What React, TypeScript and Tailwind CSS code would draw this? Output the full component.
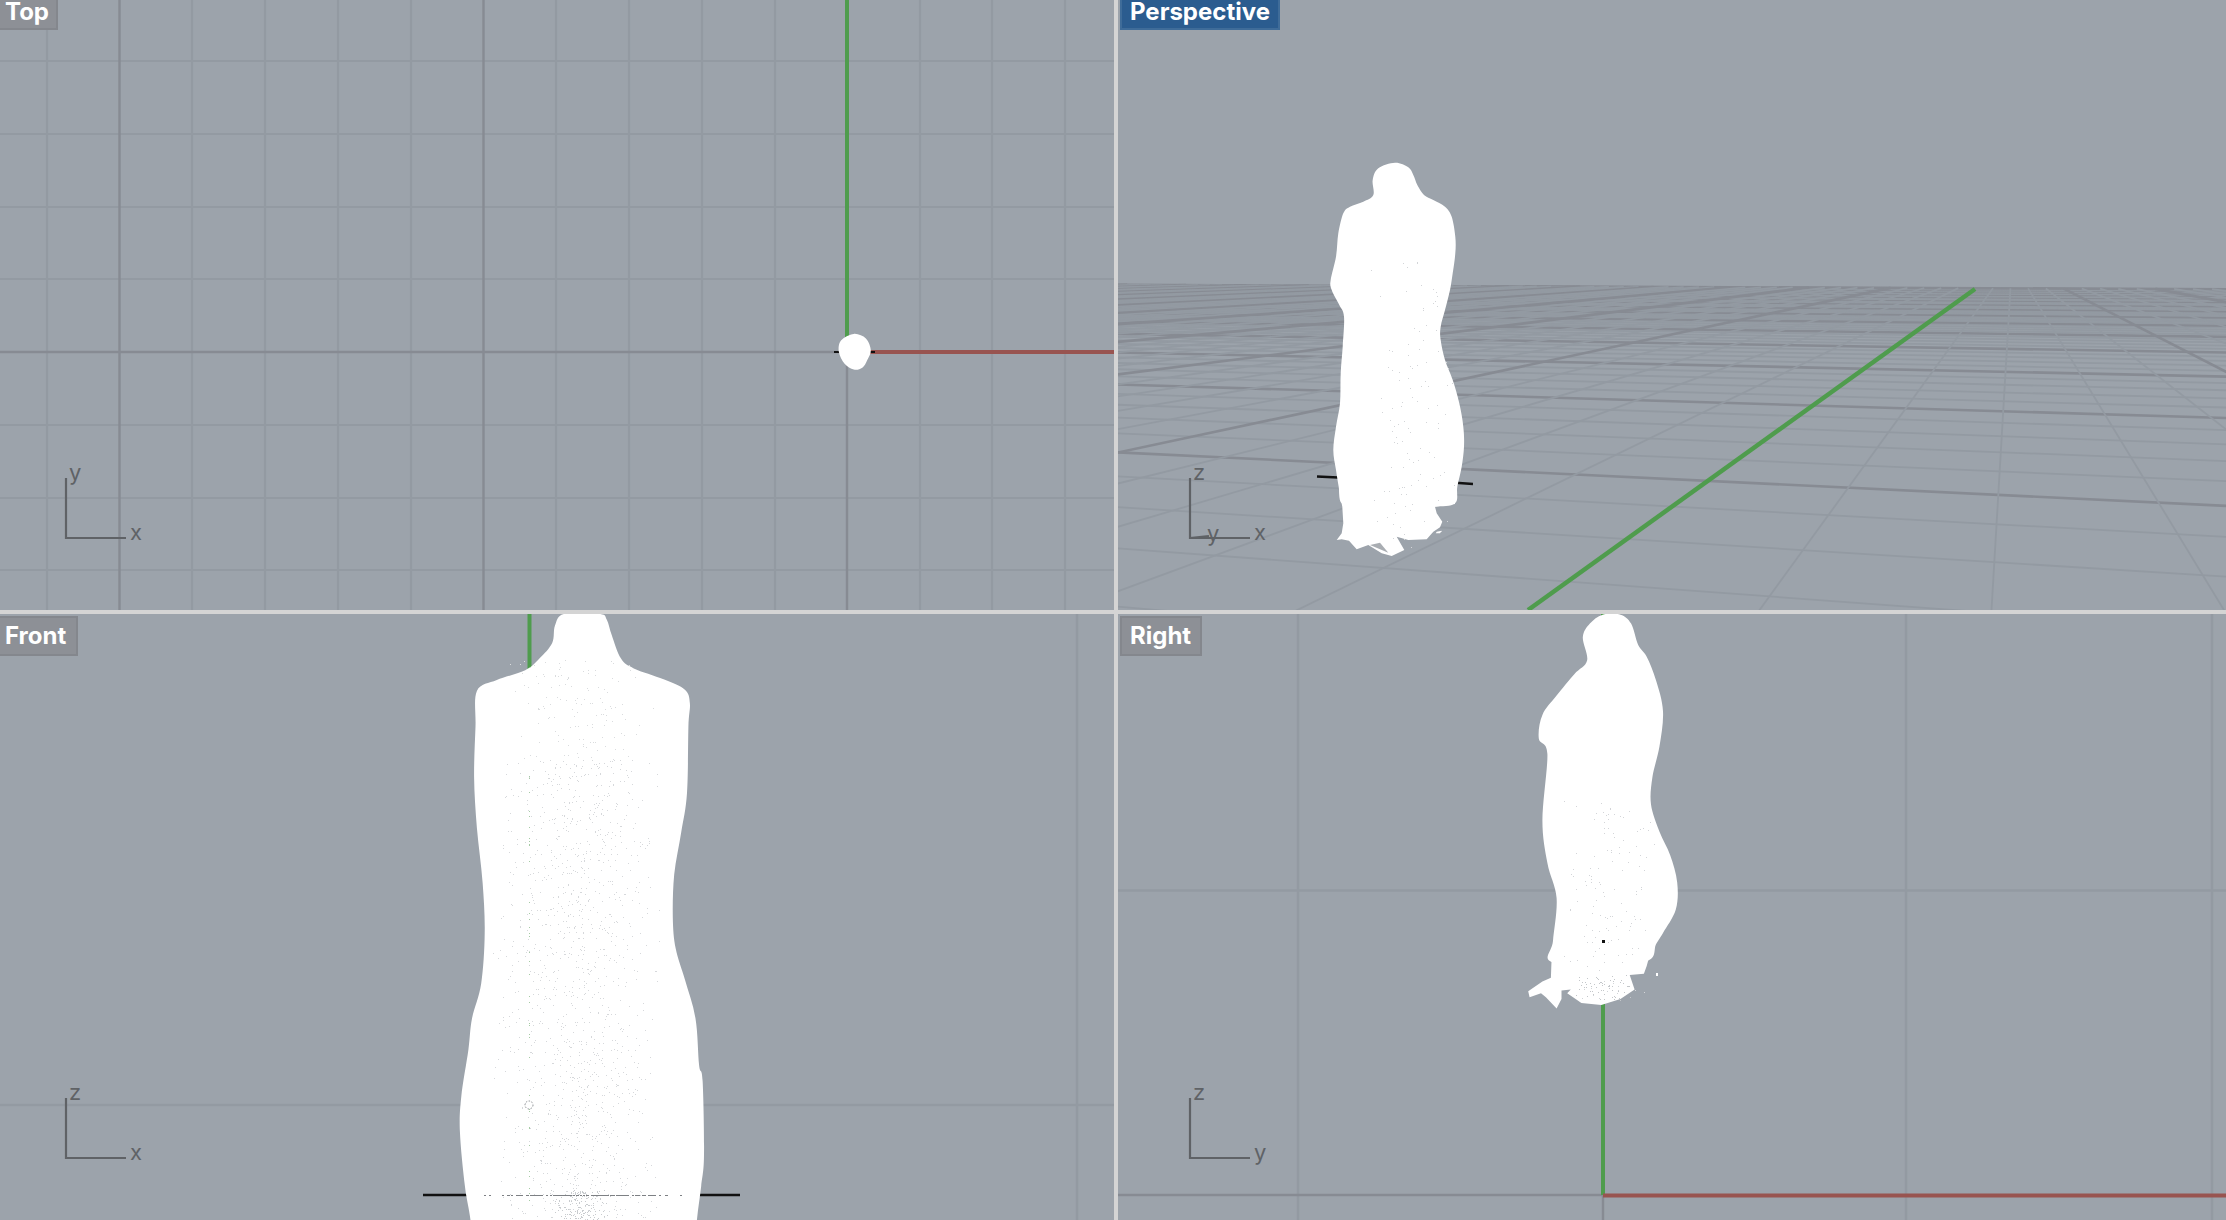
import React from "react";

type Pt = [number, number];

// smooth closed outline through the points
function outline(pts: Pt[]) {
  const n = pts.length;
  let d = `M${pts[0][0].toFixed(1)} ${pts[0][1].toFixed(1)}`;
  for (let i = 0; i < n; i++) {
    const p0 = pts[(i - 1 + n) % n];
    const p1 = pts[i];
    const p2 = pts[(i + 1) % n];
    const p3 = pts[(i + 2) % n];
    const c1x = p1[0] + (p2[0] - p0[0]) / 6;
    const c1y = p1[1] + (p2[1] - p0[1]) / 6;
    const c2x = p2[0] - (p3[0] - p1[0]) / 6;
    const c2y = p2[1] - (p3[1] - p1[1]) / 6;
    d += `C${c1x.toFixed(1)} ${c1y.toFixed(1)} ${c2x.toFixed(1)} ${c2y.toFixed(1)} ${p2[0].toFixed(1)} ${p2[1].toFixed(1)}`;
  }
  return d + "Z";
}

const jagged = (pts: Pt[]) => pts.map(([x, y]) => `${x.toFixed(1)},${y.toFixed(1)}`).join(" ");

const BLOB: Pt[] = ([
  [1203, 858], [1220, 870], [1227, 900], [1222, 925], [1215, 945], [1203, 950], [1190, 935], [1182, 905], [1185, 875],
] as Pt[]).map(([x, y]) => [x / 1.409, y / 2.57]);

const PERSP_BODY: Pt[] = ([
  [285, 68], [325, 82], [340, 105], [352, 135], [372, 165], [400, 180], [435, 200], [455, 230], [466, 290], [466, 340],
  [458, 400], [450, 450], [435, 510], [422, 560], [422, 600], [435, 660], [458, 720], [478, 790], [490, 860], [492, 920],
  [485, 980], [472, 1040], [465, 1090], [400, 1100], [300, 1100], [175, 1100], [125, 1090], [116, 1040], [108, 990], [100, 930], [108, 860], [120, 790],
  [122, 700], [128, 620], [132, 530], [118, 495], [95, 450], [92, 420], [108, 350], [115, 280], [130, 220], [150, 200],
  [190, 185], [220, 165], [218, 120], [235, 85],
] as Pt[]).map(([x, y]) => [1300 + x / 3, 140 + y / 3]);

const PERSP_FRINGE: Pt[] = ([
  [390, 0], [390, 42], [330, 50], [335, 70], [352, 95], [345, 112], [325, 125], [305, 148], [250, 150], [215, 140],
  [238, 180], [200, 198], [170, 190], [130, 165], [95, 178], [72, 152], [50, 148], [35, 150], [50, 130], [55, 100], [52, 50], [42, 0],
] as Pt[]).map(([x, y]) => [1325 + x / 3, 490 + y / 3]);

const PERSP_CHIP: Pt[] = ([[335, 125], [350, 122], [345, 130], [332, 130]] as Pt[]).map(([x, y]) => [1325 + x / 3, 490 + y / 3]);
const PERSP_GAP: Pt[] = ([[135, 165], [165, 158], [190, 188]] as Pt[]).map(([x, y]) => [1325 + x / 3, 490 + y / 3]);

const FRONT_BODY: Pt[] = ([
  [795, 10], [782, 40], [778, 85], [760, 125], [740, 155], [700, 180], [672, 208], [670, 300], [668, 430], [672, 560],
  [680, 700], [683, 830], [678, 960], [665, 1050], [660, 1130], [650, 1250], [648, 1340], [655, 1480], [663, 1568], [668, 1680],
  [977, 1680], [982, 1568], [988, 1480], [992, 1400], [990, 1210], [985, 1170], [980, 1050], [965, 950], [952, 870], [948, 790],
  [950, 680], [960, 570], [968, 470], [970, 300], [972, 240], [965, 205], [935, 178], [893, 150], [875, 125], [862, 65],
  [855, 25], [845, 10],
] as Pt[]).map(([x, y]) => [x / 1.409, 610 + y / 2.57]);

const RIGHT_BODY: Pt[] = ([
  [690, 12], [715, 12], [730, 35], [740, 90], [752, 120], [765, 180], [775, 260], [770, 350], [760, 430], [758, 500],
  [770, 570], [785, 630], [795, 700], [793, 770], [775, 830], [765, 860], [755, 900], [700, 910], [618, 905], [620, 850], [625, 740], [612, 650], [605, 540], [612, 370], [600, 330],
  [605, 270], [625, 220], [650, 165], [668, 130], [662, 70], [672, 35],
] as Pt[]).map(([x, y]) => [1113 + x / 1.409, 610 + y / 2.57]);

const RIGHT_FRINGE: Pt[] = ([
  [755, 895], [752, 915], [748, 935], [728, 938], [735, 975], [715, 1000], [688, 1015], [660, 1010], [640, 985], [645, 975],
  [632, 978], [632, 1000], [625, 1024], [610, 995], [603, 985], [587, 995], [585, 980], [605, 955], [617, 945], [618, 895],
] as Pt[]).map(([x, y]) => [1113 + x / 1.409, 610 + y / 2.57]);

// grey speckle from the scanned mesh
function speckle(x0: number, x1: number, y0: number, y1: number, count: number, seed: number) {
  let s = seed;
  const next = () => {
    s = (s * 16807) % 2147483647;
    return s / 2147483647;
  };
  const dots: Pt[] = [];
  for (let i = 0; i < count; i++) {
    const a = (next() + next()) / 2;
    const b = next();
    dots.push([Math.round(x0 + a * (x1 - x0)), Math.round(y0 + b * (y1 - y0))]);
  }
  return dots;
}

const MINOR = "#939aa2";
const MAJOR = "#878b93";
const GREEN = "#4f9c4d";
const RED = "#985450";

// ground plane of the perspective view, u and v in grid cells
const project = (u: number, v: number): Pt => {
  const a = -0.0657 * u;
  const b = 0.2213 * v;
  const w = 1 + a + b;
  return [(1371 + a * -2660 + b * 2012) / w, (723 + a * 270 + b * 262) / w];
};

function PerspectiveGrid() {
  const lines: React.ReactElement[] = [];
  for (let v = -15; v <= 75; v++) {
    const uMax = Math.min(75, (0.95 + 0.2213 * v) / 0.0657);
    if (uMax < -75) continue;
    const [x1, y1] = project(-75, v);
    const [x2, y2] = project(uMax, v);
    const major = v % 5 === 0;
    lines.push(
      <line key={`v${v}`} x1={x1} y1={y1} x2={x2} y2={y2} stroke={major ? MAJOR : MINOR} strokeWidth={major ? 2.6 : 1.8} />
    );
  }
  for (let u = -75; u <= 75; u++) {
    const vMin = Math.max(-15, (0.0657 * u - 0.95) / 0.2213);
    if (u === 0) continue;
    const [x1, y1] = project(u, vMin);
    const [x2, y2] = project(u, 75);
    const major = u % 5 === 0;
    lines.push(
      <line key={`u${u}`} x1={x1} y1={y1} x2={x2} y2={y2} stroke={major ? MAJOR : MINOR} strokeWidth={major ? 2.6 : 1.8} />
    );
  }
  return <g>{lines}</g>;
}

function Gizmo({ x, y, top, right, ground }: { x: number; y: number; top: string; right: string; ground?: boolean }) {
  const label = "fill-[#5f6266] text-[22px] [font-family:Inter,sans-serif]";
  return (
    <g>
      <path d={`M${x} ${y - 60}V${y}H${x + 60}`} fill="none" stroke="#5f6266" strokeWidth={2.2} />
      {ground && <path d={`M${x} ${y}L${x + 19} ${y - 2}`} stroke="#5f6266" strokeWidth={2} />}
      <text x={x + 3} y={y - 58} className={label}>{top}</text>
      {ground && <text x={x + 17} y={y + 3} className={label}>y</text>}
      <text x={x + 64} y={y + 2} className={label}>{right}</text>
    </g>
  );
}

function TopView() {
  const vs = [47, 192, 265, 338, 411, 556, 629, 702, 775, 920, 992, 1065];
  const hs = [61, 134, 207, 279, 425, 498, 570];
  return (
    <svg viewBox="0 0 1114 610" className="block w-full h-full">
      {vs.map((x) => <line key={x} x1={x} y1={0} x2={x} y2={610} stroke={MINOR} strokeWidth={2.2} />)}
      {hs.map((y) => <line key={y} x1={0} y1={y} x2={1114} y2={y} stroke={MINOR} strokeWidth={2.2} />)}
      <path d="M119.5 0V610M483.5 0V610M847 352V610M0 352H847" stroke={MAJOR} strokeWidth={2.4} fill="none" />
      <line x1={847} y1={0} x2={847} y2={340} stroke={GREEN} strokeWidth={4} />
      <line x1={870} y1={352} x2={1114} y2={352} stroke={RED} strokeWidth={4} />
      <path d="M834 352H840M870 352H875" stroke="#111" strokeWidth={2} />
      <path d={outline(BLOB)} fill="#fff" />
      <Gizmo x={66} y={538} top="y" right="x" />
    </svg>
  );
}

function PerspectiveView() {
  return (
    <svg viewBox="1118 0 1108 610" className="block w-full h-full">
      <PerspectiveGrid />
      <line x1={1528} y1={610} x2={1975} y2={289} stroke={GREEN} strokeWidth={4.5} />
      <path d="M1317 476.5L1338 477.5M1452 482.5L1473 484" stroke="#111" strokeWidth={2.5} />
      <path d={outline(PERSP_BODY)} fill="#fff" />
      <polygon points={jagged(PERSP_FRINGE)} fill="#fff" />
      <polygon points={jagged(PERSP_CHIP)} fill="#fff" />
      <polygon points={jagged(PERSP_GAP)} fill="#a9adb2" />
      {speckle(1370, 1455, 260, 550, 110, 11).map(([x, y], i) => (
        <rect key={i} x={x} y={y} width={1} height={1} fill="#d3d5d8" />
      ))}
      <Gizmo x={1190} y={538} top="z" right="x" ground />
    </svg>
  );
}

function FrontView() {
  return (
    <svg viewBox="0 614 1114 606" className="block w-full h-full">
      <path d="M0 1105H1114M1077 614V1220" stroke={MINOR} strokeWidth={2.4} fill="none" />
      <line x1={529.5} y1={614} x2={529.5} y2={672} stroke={GREEN} strokeWidth={4} />
      <path d="M423 1195H740" stroke="#111" strokeWidth={2.5} />
      <path d={outline(FRONT_BODY)} fill="#fff" />
      {speckle(495, 660, 660, 760, 130, 3).map(([x, y], i) => (
        <rect key={i} x={x} y={y} width={1} height={1} fill="#dadcde" />
      ))}
      {speckle(490, 665, 760, 1220, 1300, 7).map(([x, y], i) => (
        <rect key={i} x={x} y={y} width={1} height={1} fill="#d6d8db" />
      ))}
      {speckle(550, 610, 1190, 1220, 160, 13).map(([x, y], i) => (
        <rect key={i} x={x} y={y} width={1} height={1} fill="#c8cbce" />
      ))}
      {speckle(520, 540, 760, 1200, 40, 23).map(([, y], i) => (
        <rect key={i} x={529} y={y} width={1} height={1} fill="#a5cba4" />
      ))}
      {speckle(475, 695, 1195, 1195.4, 110, 31).map(([x], i) => (
        <rect key={i} x={x} y={1195} width={2} height={1} fill="#7d8084" />
      ))}
      <circle cx={529} cy={1105} r={4} fill="none" stroke="#8a8d91" strokeWidth={1} strokeDasharray="1.5 1.5" />
      <Gizmo x={66} y={1158} top="z" right="x" />
    </svg>
  );
}

function RightView() {
  return (
    <svg viewBox="1118 614 1108 606" className="block w-full h-full">
      <path d="M1298 614V1220M1906 614V1220M2212 614V1220M1118 890.5H2226" stroke={MINOR} strokeWidth={2.4} fill="none" />
      <path d="M1118 1195H1603M1603 1195V1220" stroke={MAJOR} strokeWidth={2.4} fill="none" />
      <line x1={1603} y1={614} x2={1603} y2={1195} stroke={GREEN} strokeWidth={4} />
      <line x1={1603} y1={1195.5} x2={2226} y2={1195.5} stroke={RED} strokeWidth={4} />
      <path d={outline(RIGHT_BODY)} fill="#fff" />
      <polygon points={jagged(RIGHT_FRINGE)} fill="#fff" />
      <rect x={1656} y={973} width={2} height={3} fill="#fff" />
      {speckle(1560, 1660, 800, 1000, 130, 5).map(([x, y], i) => (
        <rect key={i} x={x} y={y} width={1} height={1} fill="#d3d5d8" />
      ))}
      {speckle(1570, 1635, 975, 1000, 60, 9).map(([x, y], i) => (
        <rect key={i} x={x} y={y} width={1} height={1} fill="#c4c7ca" />
      ))}
      <rect x={1602} y={940} width={3} height={3} fill="#111" />
      <Gizmo x={1190} y={1158} top="z" right="y" />
    </svg>
  );
}

function Tag({ children, className }: { children: React.ReactNode; className: string }) {
  return (
    <span className={`absolute flex items-center text-white font-bold text-[24px] leading-none [font-family:Inter,sans-serif] ${className}`}>
      {children}
    </span>
  );
}

export default function App() {
  return (
    <div className="w-[2226px] h-[1220px] overflow-hidden bg-[#d4d4d4] grid grid-cols-[1114px_1108px] grid-rows-[610px_606px] gap-1">
      <div className="relative overflow-hidden bg-[#9ca3ab]">
        <TopView />
        <Tag className="left-0 top-0 w-[58px] h-[30px] pl-[5px] pb-1 bg-[#8d9096] border-r-2 border-b-2 border-[#84878d]">Top</Tag>
      </div>
      <div className="relative overflow-hidden bg-[#9ca3ab]">
        <PerspectiveView />
        <Tag className="left-[2px] top-0 w-[160px] h-[30px] pl-[8px] pb-1 bg-[#2b5c8f] border-2 border-t-0 border-[#3f6c99]">Perspective</Tag>
      </div>
      <div className="relative overflow-hidden bg-[#9ca3ab]">
        <FrontView />
        <Tag className="left-0 top-[2px] w-[78px] h-[40px] pl-[5px] bg-[#8d9096] border-2 border-l-0 border-[#84878d]">Front</Tag>
      </div>
      <div className="relative overflow-hidden bg-[#9ca3ab]">
        <RightView />
        <Tag className="left-[2px] top-[2px] w-[82px] h-[40px] pl-[8px] bg-[#8d9096] border-2 border-[#84878d]">Right</Tag>
      </div>
    </div>
  );
}
